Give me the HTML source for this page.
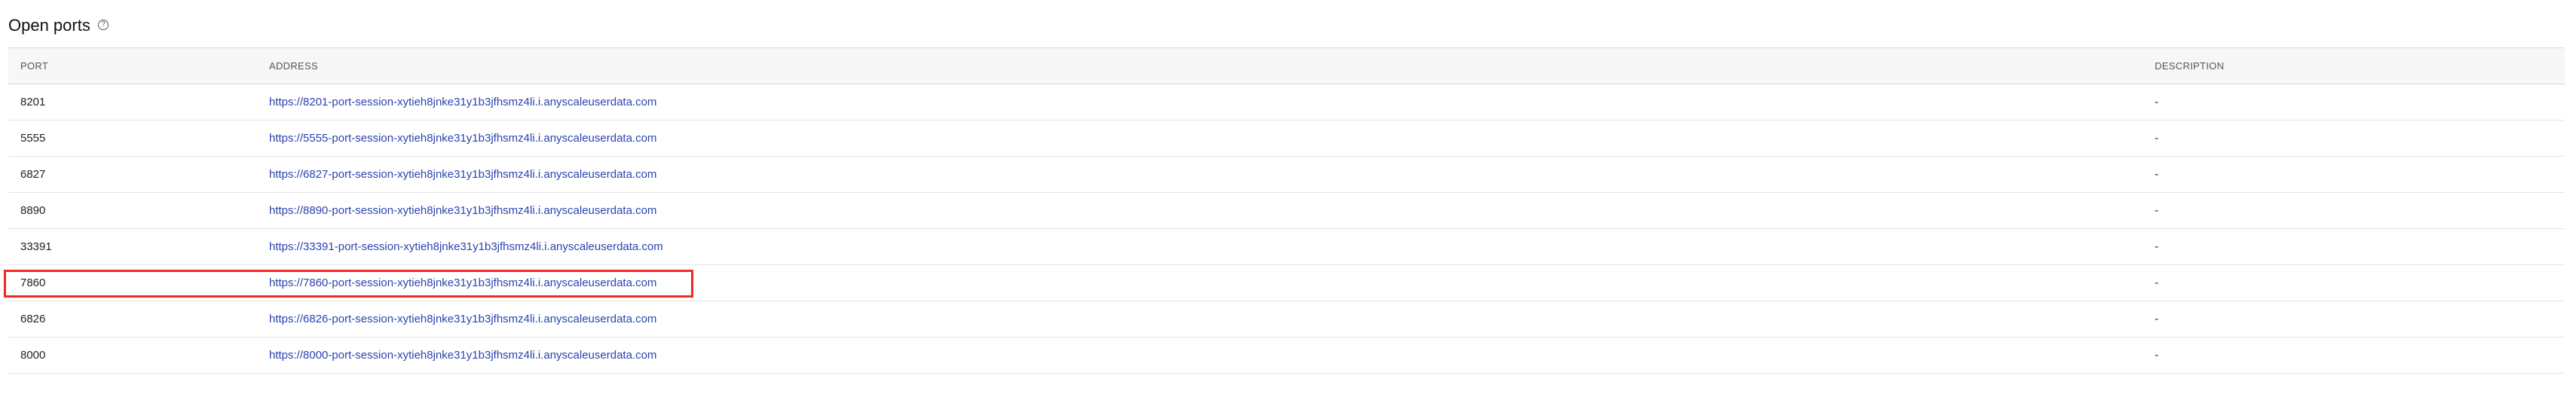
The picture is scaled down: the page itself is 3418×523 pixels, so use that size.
<!DOCTYPE html>
<html><head><meta charset="utf-8"><style>
body{margin:0;width:3418px;height:523px;background:#fff;font-family:"Liberation Sans",sans-serif;position:relative;overflow:hidden}
.title{position:absolute;left:11px;top:21px;font-size:22px;color:#111;line-height:26px}
.help{position:absolute;left:130px;top:26px;width:12px;height:12px;border:1.3px solid #555;border-radius:50%;font-size:10px;line-height:12px;text-align:center;color:#555}
.tbl{position:absolute;left:11px;top:63px;width:3392px}
.hdr{height:47px;background:#f7f7f7;border-top:1.5px solid #d3d7de;border-bottom:1.5px solid #d3d7de;position:relative;font-size:13px;color:#555;letter-spacing:.3px}
.row{height:47px;border-bottom:1.5px solid #e3e5e8;position:relative;font-size:15px;color:#222}
.c{position:absolute;top:0;line-height:47px;white-space:nowrap}
.p{left:16px}.a{left:346px}.d{left:2848px}
.row .a{color:#2a44b0}
.box{position:absolute;left:5px;top:358px;width:909px;height:31px;border:3px solid #ef2a24}
</style></head><body>
<div class="title">Open ports</div><div class="help">?</div>
<div class="tbl">
<div class="hdr"><span class="c p">PORT</span><span class="c a">ADDRESS</span><span class="c d">DESCRIPTION</span></div>
<div class="row"><span class="c p">8201</span><span class="c a">https://8201-port-session-xytieh8jnke31y1b3jfhsmz4li.i.anyscaleuserdata.com</span><span class="c d">-</span></div>
<div class="row"><span class="c p">5555</span><span class="c a">https://5555-port-session-xytieh8jnke31y1b3jfhsmz4li.i.anyscaleuserdata.com</span><span class="c d">-</span></div>
<div class="row"><span class="c p">6827</span><span class="c a">https://6827-port-session-xytieh8jnke31y1b3jfhsmz4li.i.anyscaleuserdata.com</span><span class="c d">-</span></div>
<div class="row"><span class="c p">8890</span><span class="c a">https://8890-port-session-xytieh8jnke31y1b3jfhsmz4li.i.anyscaleuserdata.com</span><span class="c d">-</span></div>
<div class="row"><span class="c p">33391</span><span class="c a">https://33391-port-session-xytieh8jnke31y1b3jfhsmz4li.i.anyscaleuserdata.com</span><span class="c d">-</span></div>
<div class="row"><span class="c p">7860</span><span class="c a">https://7860-port-session-xytieh8jnke31y1b3jfhsmz4li.i.anyscaleuserdata.com</span><span class="c d">-</span></div>
<div class="row"><span class="c p">6826</span><span class="c a">https://6826-port-session-xytieh8jnke31y1b3jfhsmz4li.i.anyscaleuserdata.com</span><span class="c d">-</span></div>
<div class="row"><span class="c p">8000</span><span class="c a">https://8000-port-session-xytieh8jnke31y1b3jfhsmz4li.i.anyscaleuserdata.com</span><span class="c d">-</span></div>
</div>
<div class="box"></div>
</body></html>
